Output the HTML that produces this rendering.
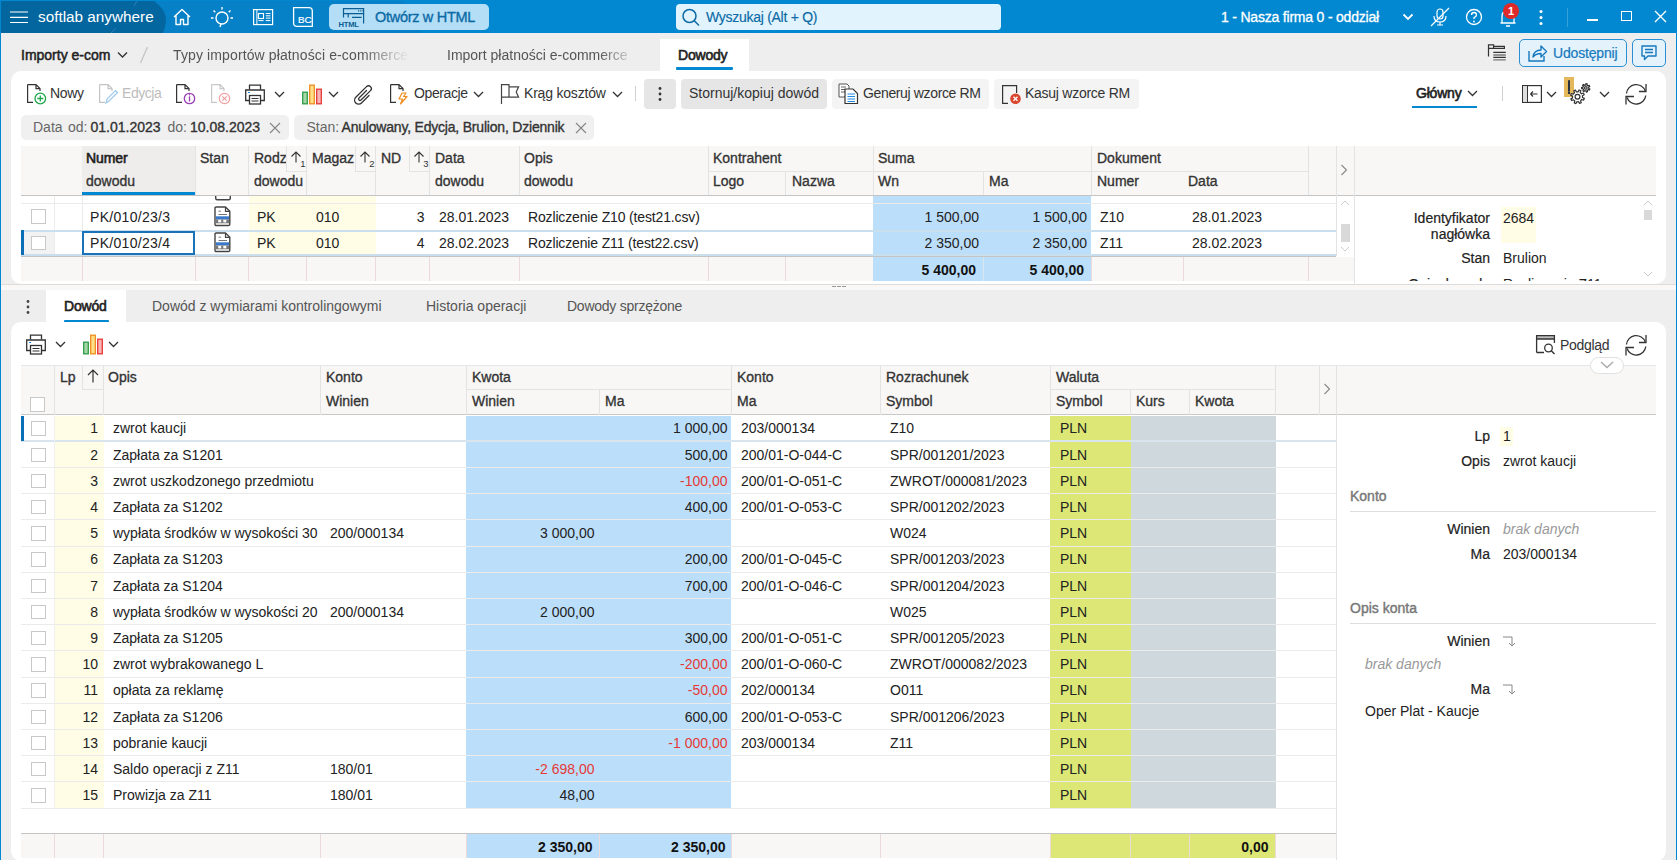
<!DOCTYPE html>
<html><head><meta charset="utf-8"><style>
html,body{margin:0;padding:0}
body{width:1677px;height:860px;position:relative;overflow:hidden;background:#eeeeee;font-family:"Liberation Sans",sans-serif;font-size:14px;color:#222}
.t{position:absolute;white-space:nowrap;font-size:14px}
svg{overflow:visible}
</style></head><body>
<div style="position:absolute;left:0px;top:0px;width:1677px;height:33px;background:#0288d1"></div>
<svg style="position:absolute;left:150px;top:0px;" width="280" height="33" viewBox="0 0 280 33"><path d="M0 1 H254 L271 33 H0 Z" fill="#0680c6"/></svg>
<svg style="position:absolute;left:0px;top:0px;" width="170" height="33" viewBox="0 0 170 33"><path d="M1 1 H154 C163 8 166 14 166 19 C166 25 164 30 163 33 H1 Z" fill="#04669f"/><path d="M137 1 L134 6 M116 28 L111 33" stroke="#2b7fb2" stroke-width="1"/></svg>
<svg style="position:absolute;left:9px;top:10px;" width="20" height="14" viewBox="0 0 20 14"><path d="M1 2 H19 M1 7.3 H19 M1 12.5 H19" stroke="#fff" stroke-width="1.2"/></svg>
<div class="t" style="left:38px;top:7.0px;line-height:20px;color:#fff;font-size:15.3px;">softlab anywhere</div>
<svg style="position:absolute;left:172px;top:8px;" width="20" height="18" viewBox="0 0 20 18"><path d="M2 9 L10 1.5 L18 9 M4 7.5 V16.5 H8.5 V11.5 H11.5 V16.5 H16 V7.5" fill="none" stroke="#fff" stroke-width="1.4" stroke-linejoin="round"/></svg>
<svg style="position:absolute;left:210px;top:6px;" width="24" height="22" viewBox="0 0 24 22"><circle cx="12" cy="12" r="6" fill="none" stroke="#fff" stroke-width="1.4"/><path d="M12 1 V3.5 M3.5 4.5 L5.3 6.3 M20.5 4.5 L18.7 6.3 M1 12 H3.5 M20.5 12 H23 M11 18 L10 21" stroke="#fff" stroke-width="1.4"/></svg>
<svg style="position:absolute;left:252px;top:8px;" width="22" height="18" viewBox="0 0 22 18"><rect x="1.6" y="1.6" width="19" height="15" fill="none" stroke="#fff" stroke-width="1.2"/><path d="M4.9 2 V16.5" stroke="#fff" stroke-width="1"/><rect x="6.5" y="5.5" width="5" height="5" fill="none" stroke="#fff" stroke-width="1.1"/><path d="M13.8 5.5 H18.5 M13.8 7.8 H18.5 M13.8 10.1 H18.5 M6.5 12.6 H11.5 M13.8 12.6 H18.5" stroke="#fff" stroke-width="1"/></svg>
<svg style="position:absolute;left:292px;top:6px;" width="22" height="22" viewBox="0 0 22 22"><path d="M1.6 1.6 H17 Q20.3 1.6 20.3 5 V20.3 H5 Q1.6 20.3 1.6 17 Z" fill="none" stroke="#fff" stroke-width="1.3"/><text x="6" y="17.4" font-family="Liberation Sans" font-size="9.8" fill="#fff" stroke="#fff" stroke-width="0.2">BC</text></svg>
<div style="position:absolute;left:329px;top:4px;width:160px;height:26px;background:#b3def5;border-radius:5px"></div>
<svg style="position:absolute;left:337px;top:6px;" width="28" height="22" viewBox="0 0 28 22"><path d="M6.5 11.5 V2.6 H26.6 V17.5 M6.5 7.6 H26.6 M11.2 7.6 V11.5 M15 11.3 H24.6" fill="none" stroke="#0b5d93" stroke-width="1.2"/><path d="M21 4.9 H22 M22.8 4.9 H23.8 M24.6 4.9 H25.6" stroke="#0b5d93" stroke-width="1.2"/><text x="1.5" y="20.6" font-family="Liberation Sans" font-size="7.6" font-weight="bold" fill="#0b5d93" letter-spacing="-0.2">HTML</text></svg>
<div class="t" style="left:375px;top:7.0px;line-height:20px;color:#0b6aa6;font-size:14.5px;letter-spacing:-0.3px;-webkit-text-stroke-width:0.35px">Otwórz w HTML</div>
<div style="position:absolute;left:676px;top:4px;width:325px;height:26px;background:#e1f3fc;border-radius:4px"></div>
<svg style="position:absolute;left:680px;top:7px;" width="22" height="20" viewBox="0 0 22 20"><circle cx="9.5" cy="9" r="6.5" fill="none" stroke="#0b6aa6" stroke-width="1.5"/><path d="M14.3 13.8 L19 18.5" stroke="#0b6aa6" stroke-width="1.5"/></svg>
<div class="t" style="left:706px;top:7.0px;line-height:20px;color:#0b6aa6;font-size:14px;letter-spacing:-0.28px;-webkit-text-stroke-width:0.15px">Wyszukaj (Alt + Q)</div>
<div class="t" style="left:1221px;top:7.0px;line-height:20px;color:#fff;font-size:14px;letter-spacing:-0.2px;-webkit-text-stroke-width:0.3px">1 - Nasza firma 0 - oddział</div>
<svg style="position:absolute;left:1402px;top:13px;" width="12" height="8" viewBox="0 0 12 8"><path d="M1.5 1.5 L6 6 L10.5 1.5" fill="none" stroke="#fff" stroke-width="1.8"/></svg>
<svg style="position:absolute;left:1429px;top:6px;" width="22" height="22" viewBox="0 0 22 22"><rect x="8" y="3" width="6" height="10" rx="3" fill="none" stroke="#fff" stroke-width="1.2"/><path d="M5 10 Q5 16 11 16 Q17 16 17 10 M11 16 V19 M8 19 H14 M2 20 L20 2" fill="none" stroke="#fff" stroke-width="1.2"/></svg>
<svg style="position:absolute;left:1465px;top:8px;" width="18" height="18" viewBox="0 0 18 18"><circle cx="9" cy="9" r="7.5" fill="none" stroke="#fff" stroke-width="1.3"/><path d="M6.5 7 Q6.5 4.5 9 4.5 Q11.5 4.5 11.5 7 Q11.5 8.5 9 9.7 V11" fill="none" stroke="#fff" stroke-width="1.3"/><circle cx="9" cy="13.5" r="0.9" fill="#fff"/></svg>
<svg style="position:absolute;left:1498px;top:6px;" width="20" height="22" viewBox="0 0 20 22"><path d="M4 17 V10 Q4 5 10 5 Q16 5 16 10 V17 H2.5 H17.5 M8 20 H12" fill="none" stroke="#fff" stroke-width="1.3"/></svg>
<div style="position:absolute;left:1503px;top:3px;width:16px;height:16px;background:#e02a2a;border-radius:50%"></div>
<div class="t" style="left:1503px;top:3.0px;line-height:16px;width:16px;text-align:center;color:#fff;font-size:11px;font-weight:bold">1</div>
<svg style="position:absolute;left:1538px;top:9px;" width="6" height="17" viewBox="0 0 6 17"><circle cx="3" cy="2.5" r="1.5" fill="#fff"/><circle cx="3" cy="8.5" r="1.5" fill="#fff"/><circle cx="3" cy="14.5" r="1.5" fill="#fff"/></svg>
<div style="position:absolute;left:1567px;top:8px;width:1px;height:19px;background:#3aa0dc"></div>
<div style="position:absolute;left:1587px;top:19px;width:11px;height:1.5px;background:#fff"></div>
<div style="position:absolute;left:1621px;top:11px;width:11px;height:10px;border:1.4px solid #fff;box-sizing:border-box"></div>
<svg style="position:absolute;left:1654px;top:10px;" width="13" height="13" viewBox="0 0 13 13"><path d="M1 1 L12 12 M12 1 L1 12" stroke="#fff" stroke-width="1.4"/></svg>
<div style="position:absolute;left:0px;top:33px;width:1677px;height:827px;background:#eeeeee"></div>
<div style="position:absolute;left:0px;top:0px;width:1px;height:860px;background:#0288d1"></div>
<div style="position:absolute;left:1676px;top:0px;width:1px;height:860px;background:#0288d1"></div>
<div class="t" style="left:21px;top:45.0px;line-height:20px;font-size:14px;color:#222;-webkit-text-stroke-width:0.5px">Importy e-com</div>
<svg style="position:absolute;left:117px;top:51px;" width="11" height="8" viewBox="0 0 11 8"><path d="M1 1.5 L5.5 6 L10 1.5" fill="none" stroke="#333" stroke-width="1.3"/></svg>
<svg style="position:absolute;left:139px;top:46px;" width="10" height="18" viewBox="0 0 10 18"><path d="M8.5 1 L1.5 17" stroke="#c4c4c4" stroke-width="1.2"/></svg>
<div class="t" style="left:173px;top:45px;line-height:20px;color:#555;width:236px;letter-spacing:0.12px;overflow:hidden;white-space:nowrap;-webkit-mask-image:linear-gradient(90deg,#000 80%,transparent 100%)">Typy importów płatności e-commerce</div>
<div class="t" style="left:447px;top:45px;line-height:20px;color:#555;width:190px;overflow:hidden;white-space:nowrap;-webkit-mask-image:linear-gradient(90deg,#000 80%,transparent 100%)">Import płatności e-commerce</div>
<div style="position:absolute;left:660px;top:39px;width:89px;height:33px;background:#fff"></div>
<div class="t" style="left:678px;top:45.0px;line-height:20px;color:#222;-webkit-text-stroke-width:0.6px;letter-spacing:-0.2px">Dowody</div>
<div style="position:absolute;left:676px;top:67px;width:57px;height:2.5px;background:#0288d1;border-radius:1px"></div>
<svg style="position:absolute;left:1486px;top:43px;" width="22" height="20" viewBox="0 0 22 20"><path d="M2.5 13.5 V1.8 H7.6 V5.4 H2.5 M7.6 3.4 H18.4 V5.4 H7.6" fill="none" stroke="#333" stroke-width="1.2"/><path d="M7.3 9.4 H19.8 M7.3 14.4 H19.8" stroke="#333" stroke-width="1.1"/><path d="M7.3 12 H19.8 M7.3 16.9 H19.8" stroke="#777" stroke-width="1.3"/></svg>
<div style="position:absolute;left:1519px;top:39px;width:108px;height:28px;background:#e3f2fb;border:1px solid #2a8fd3;border-radius:5px;box-sizing:border-box"></div>
<svg style="position:absolute;left:1526px;top:43px;" width="22" height="20" viewBox="0 0 22 20"><path d="M3 8 V18 H18 V13" fill="none" stroke="#1679be" stroke-width="1.4"/><path d="M7 14 Q8 7 15 7 V3 L20.5 8.5 L15 14 V10.5 Q10 10.5 7 14 Z" fill="none" stroke="#1679be" stroke-width="1.4" stroke-linejoin="round"/></svg>
<div class="t" style="left:1553px;top:43.0px;line-height:20px;color:#1679be;font-size:14px;letter-spacing:-0.18px;-webkit-text-stroke-width:0.2px">Udostępnij</div>
<div style="position:absolute;left:1632px;top:39px;width:34px;height:28px;background:#e3f2fb;border:1px solid #2a8fd3;border-radius:5px;box-sizing:border-box"></div>
<svg style="position:absolute;left:1640px;top:44px;" width="18" height="18" viewBox="0 0 18 18"><path d="M2 2 H16 V12 H8 L4.5 15.5 V12 H2 Z" fill="none" stroke="#1679be" stroke-width="1.4" stroke-linejoin="round"/><path d="M5 5.5 H13 M5 8.5 H13" stroke="#1679be" stroke-width="1.4"/></svg>
<div style="position:absolute;left:11px;top:71px;width:1655px;height:213px;background:#fff;border-radius:10px"></div>
<svg style="position:absolute;left:26px;top:84px;" width="22" height="21" viewBox="0 0 22 21"><path d="M1.6 0.6 H10 L14 4.6 V7 M10 0.6 V4.6 H14 M1.6 0.6 V18.4 H7" fill="none" stroke="#333" stroke-width="1.2"/><circle cx="14.3" cy="14.5" r="5.3" fill="#fff" stroke="#1fa64a" stroke-width="1.3"/><path d="M14.3 11.5 V17.5 M11.3 14.5 H17.3" stroke="#1fa64a" stroke-width="1.3"/></svg>
<div class="t" style="left:50px;top:83.0px;line-height:20px;color:#333;letter-spacing:-0.35px">Nowy</div>
<svg style="position:absolute;left:98px;top:84px;" width="22" height="21" viewBox="0 0 22 21"><path d="M1.6 0.6 H10 L14 4.6 V7 M10 0.6 V4.6 H14 M1.6 0.6 V18.4 H7" fill="none" stroke="#c4c4c4" stroke-width="1.2"/><path d="M8 19 L9 15 L17.5 6.5 L19.5 8.5 L11 17 Z" fill="#fff" stroke="#9cc8ec" stroke-width="1.2"/></svg>
<div class="t" style="left:122px;top:83.0px;line-height:20px;color:#bdbdbd;letter-spacing:-0.45px">Edycja</div>
<svg style="position:absolute;left:175px;top:84px;" width="22" height="21" viewBox="0 0 22 21"><path d="M1.6 0.6 H10 L14 4.6 V7 M10 0.6 V4.6 H14 M1.6 0.6 V18.4 H7" fill="none" stroke="#333" stroke-width="1.2"/><circle cx="14.5" cy="14.5" r="5.2" fill="#fff" stroke="#9b3fb5" stroke-width="1.3"/><path d="M14.5 12.3 V17.5" stroke="#9b3fb5" stroke-width="1.3"/><circle cx="14.5" cy="10.7" r="0.7" fill="#9b3fb5"/></svg>
<svg style="position:absolute;left:210px;top:84px;" width="22" height="21" viewBox="0 0 22 21"><path d="M1.6 0.6 H10 L14 4.6 V7 M10 0.6 V4.6 H14 M1.6 0.6 V18.4 H7" fill="none" stroke="#c8c8c8" stroke-width="1.2"/><circle cx="14.5" cy="14.5" r="5.2" fill="#fff" stroke="#f2a0a0" stroke-width="1.2"/><path d="M12.3 12.3 L16.7 16.7 M16.7 12.3 L12.3 16.7" stroke="#f2a0a0" stroke-width="1.2"/></svg>
<svg style="position:absolute;left:244px;top:84px;" width="22" height="21" viewBox="0 0 22 21"><path d="M5.5 5.5 V1.2 H16.5 V5.5" fill="none" stroke="#333" stroke-width="1.3"/><path d="M5 16.5 H1.7 V6.0 H20.3 V16.5 H17" fill="none" stroke="#333" stroke-width="1.3"/><rect x="5.5" y="11.5" width="11" height="8.5" fill="#fff" stroke="#333" stroke-width="1.3"/><path d="M7.5 14.5 H14.5 M7.5 17.0 H14.5" stroke="#333" stroke-width="1"/><path d="M4 8.5 H6" stroke="#1e88e5" stroke-width="1"/></svg>
<svg style="position:absolute;left:274px;top:91px;" width="11" height="7" viewBox="0 0 11 7"><path d="M1 1 L5.5 5.5 L10 1" fill="none" stroke="#333" stroke-width="1.3"/></svg>
<svg style="position:absolute;left:301px;top:83px;" width="22" height="22" viewBox="0 0 22 22"><rect x="1.7" y="9.2" width="4.6" height="11.6" fill="#a5d6a7" stroke="#2e9e47" stroke-width="1.3"/><rect x="8.7" y="2.2" width="4.6" height="18.6" fill="#ffe08a" stroke="#f08c1f" stroke-width="1.3"/><rect x="15.7" y="6.2" width="4.6" height="14.6" fill="#f7b5b5" stroke="#e53935" stroke-width="1.3"/></svg>
<svg style="position:absolute;left:328px;top:91px;" width="11" height="7" viewBox="0 0 11 7"><path d="M1 1 L5.5 5.5 L10 1" fill="none" stroke="#333" stroke-width="1.3"/></svg>
<svg style="position:absolute;left:352px;top:83px;" width="22" height="22" viewBox="0 0 22 22"><path d="M17 12.5 L9.5 20 A4 4 0 0 1 3.8 14.3 L14.5 3.6 A2.8 2.8 0 0 1 18.5 7.6 L9 17 A1.4 1.4 0 0 1 7 15 L14.5 7.5" fill="none" stroke="#333" stroke-width="1.3" stroke-linecap="round"/></svg>
<svg style="position:absolute;left:389px;top:84px;" width="22" height="21" viewBox="0 0 22 21"><path d="M1.6 0.6 H10 L14 4.6 V7 M10 0.6 V4.6 H14 M1.6 0.6 V18.4 H7" fill="none" stroke="#333" stroke-width="1.2"/><path d="M13 9 L10 15 H13.5 L11.5 20 L18 12.5 H14.5 L17 9 Z" fill="#fff" stroke="#f08c1f" stroke-width="1.2" stroke-linejoin="round"/></svg>
<div class="t" style="left:414px;top:83.0px;line-height:20px;color:#333;letter-spacing:-0.4px">Operacje</div>
<svg style="position:absolute;left:473px;top:91px;" width="11" height="7" viewBox="0 0 11 7"><path d="M1 1 L5.5 5.5 L10 1" fill="none" stroke="#333" stroke-width="1.3"/></svg>
<svg style="position:absolute;left:499px;top:84px;" width="22" height="21" viewBox="0 0 22 21"><path d="M2.5 20 V0.6 H10 V13.2 H2.5 M10 2.8 H19.6 L17.2 8 L19.6 13.2 H10" fill="none" stroke="#444" stroke-width="1.2" stroke-linejoin="miter"/></svg>
<div class="t" style="left:524px;top:83.0px;line-height:20px;color:#333;letter-spacing:-0.2px">Krąg kosztów</div>
<svg style="position:absolute;left:612px;top:91px;" width="11" height="7" viewBox="0 0 11 7"><path d="M1 1 L5.5 5.5 L10 1" fill="none" stroke="#333" stroke-width="1.3"/></svg>
<div style="position:absolute;left:635px;top:86px;width:1px;height:15px;background:#d0d0d0"></div>
<div style="position:absolute;left:644px;top:79px;width:32px;height:30px;background:#e6e6e6;border-radius:4px"></div>
<svg style="position:absolute;left:657px;top:86px;" width="6" height="16" viewBox="0 0 6 16"><circle cx="3" cy="2.5" r="1.4" fill="#333"/><circle cx="3" cy="8" r="1.4" fill="#333"/><circle cx="3" cy="13.5" r="1.4" fill="#333"/></svg>
<div style="position:absolute;left:681px;top:79px;width:146px;height:30px;background:#e6e6e6;border-radius:4px"></div>
<div class="t" style="left:689px;top:83.0px;line-height:20px;color:#333">Stornuj/kopiuj dowód</div>
<div style="position:absolute;left:832px;top:79px;width:157px;height:30px;background:#f4f4f4;border-radius:4px"></div>
<svg style="position:absolute;left:838px;top:83px;" width="22" height="22" viewBox="0 0 22 22"><path d="M1 1 H9 L11 3 V14 H1 Z" fill="#fff" stroke="#555" stroke-width="1"/><path d="M3 4 H8 M3 6.5 H8 M3 9 H8" stroke="#555" stroke-width="0.9"/><path d="M7 6 H15 L19.5 10.5 V20.5 H7 Z" fill="#fff" stroke="#333" stroke-width="1.2"/><path d="M9.5 11 H17 M9.5 13.5 H17 M9.5 16 H17 M9.5 18.5 H17" stroke="#1e88e5" stroke-width="1"/></svg>
<div class="t" style="left:863px;top:83.0px;line-height:20px;color:#333;letter-spacing:-0.36px">Generuj wzorce RM</div>
<div style="position:absolute;left:994px;top:79px;width:145px;height:30px;background:#f4f4f4;border-radius:4px"></div>
<svg style="position:absolute;left:1001px;top:84px;" width="22" height="21" viewBox="0 0 22 21"><path d="M7 19.4 H1.6 V1.6 H15.6 V9" fill="none" stroke="#333" stroke-width="1.2"/><circle cx="14.5" cy="14.8" r="5.3" fill="#d9472f"/><path d="M12.5 12.8 L16.5 16.8 M16.5 12.8 L12.5 16.8" stroke="#fff" stroke-width="1.3"/></svg>
<div class="t" style="left:1025px;top:83.0px;line-height:20px;color:#333;letter-spacing:-0.26px">Kasuj wzorce RM</div>
<div class="t" style="left:1416px;top:83.0px;line-height:20px;color:#222;-webkit-text-stroke-width:0.6px;letter-spacing:-0.2px">Główny</div>
<svg style="position:absolute;left:1467px;top:90px;" width="11" height="7" viewBox="0 0 11 7"><path d="M1 1 L5.5 5.5 L10 1" fill="none" stroke="#333" stroke-width="1.3"/></svg>
<div style="position:absolute;left:1412px;top:105.5px;width:65px;height:2px;background:#0288d1"></div>
<div style="position:absolute;left:1502px;top:86px;width:1px;height:15px;background:#d0d0d0"></div>
<svg style="position:absolute;left:1521px;top:84px;" width="22" height="20" viewBox="0 0 22 20"><rect x="1.6" y="1.6" width="18.8" height="16.8" fill="none" stroke="#333" stroke-width="1.2"/><rect x="2" y="2" width="4.5" height="16" fill="#ddd"/><path d="M6.5 2 V18" stroke="#333" stroke-width="1"/><path d="M9.5 10 H16.5 M9.5 10 L12 7.5 M9.5 10 L12 12.5" stroke="#333" stroke-width="1.2" fill="none"/></svg>
<svg style="position:absolute;left:1546px;top:91px;" width="11" height="7" viewBox="0 0 11 7"><path d="M1 1 L5.5 5.5 L10 1" fill="none" stroke="#333" stroke-width="1.3"/></svg>
<div style="position:absolute;left:1564px;top:77px;width:10px;height:20px;background:#e6b85c"></div>
<div style="position:absolute;left:1568px;top:80px;width:2px;height:11.5px;background:#2a3440;border-radius:1px"></div>
<div style="position:absolute;left:1568px;top:92.3px;width:2px;height:2px;background:#2a3440"></div>
<svg style="position:absolute;left:1568px;top:80px;" width="30" height="26" viewBox="0 0 30 26"><path d="M14.50 16.80 L14.45 17.50 L16.33 18.33 L15.69 20.08 L13.72 19.48 L13.04 20.34 L13.04 20.34 L12.50 20.80 L13.25 22.71 L11.56 23.49 L10.59 21.68 L9.50 21.80 L9.50 21.80 L8.80 21.75 L7.97 23.63 L6.22 22.99 L6.82 21.02 L5.96 20.34 L5.96 20.34 L5.50 19.80 L3.59 20.55 L2.81 18.86 L4.62 17.89 L4.50 16.80 L4.50 16.80 L4.55 16.10 L2.67 15.27 L3.31 13.52 L5.28 14.12 L5.96 13.26 L5.96 13.26 L6.50 12.80 L5.75 10.89 L7.44 10.11 L8.41 11.92 L9.50 11.80 L9.50 11.80 L10.20 11.85 L11.03 9.97 L12.78 10.61 L12.18 12.58 L13.04 13.26 L13.04 13.26 L13.50 13.80 L15.41 13.05 L16.19 14.74 L14.38 15.71 L14.50 16.80 Z" fill="#fff" stroke="#333" stroke-width="1.2" stroke-linejoin="round"/><circle cx="9.5" cy="16.8" r="2.4" fill="none" stroke="#333" stroke-width="1.2"/><path d="M20.70 7.90 L20.66 8.37 L21.87 8.94 L21.37 10.12 L20.12 9.65 L19.61 10.17 L19.61 10.17 L19.22 10.43 L19.52 11.73 L18.29 12.07 L17.88 10.80 L17.15 10.73 L17.15 10.73 L16.71 10.59 L15.88 11.63 L14.84 10.88 L15.58 9.77 L15.19 9.16 L15.19 9.16 L15.02 8.72 L13.68 8.72 L13.62 7.45 L14.96 7.33 L15.19 6.64 L15.19 6.64 L15.42 6.24 L14.59 5.19 L15.55 4.35 L16.47 5.32 L17.15 5.07 L17.15 5.07 L17.62 5.01 L17.91 3.70 L19.17 3.93 L18.99 5.25 L19.61 5.63 L19.61 5.63 L19.95 5.95 L21.15 5.37 L21.76 6.50 L20.61 7.18 L20.70 7.90 Z" fill="#fff" stroke="#333" stroke-width="1.2" stroke-linejoin="round"/><circle cx="17.8" cy="7.9" r="1.3" fill="none" stroke="#333" stroke-width="1.2"/></svg>
<svg style="position:absolute;left:1599px;top:91px;" width="11" height="7" viewBox="0 0 11 7"><path d="M1 1 L5.5 5.5 L10 1" fill="none" stroke="#333" stroke-width="1.3"/></svg>
<svg style="position:absolute;left:1625px;top:83px;" width="22" height="22" viewBox="0 0 22 22"><path d="M1.5 10.5 A9.7 9.7 0 0 1 20.3 8 M20.8 12.5 A9.7 9.7 0 0 1 2 14.5" fill="none" stroke="#333" stroke-width="1.3"/><path d="M21 1 V8.5 H14 M1 21.5 V13.5 H9" fill="none" stroke="#333" stroke-width="1.3"/></svg>
<div style="position:absolute;left:21px;top:115px;width:268px;height:25px;background:#f0f0f0;border-radius:5px"></div>
<div class="t" style="left:33px;top:117.0px;line-height:20px;color:#666">Data</div>
<div class="t" style="left:68px;top:117.0px;line-height:20px;color:#666">od:</div>
<div class="t" style="left:90.5px;top:117.0px;line-height:20px;color:#333;-webkit-text-stroke:0.35px #333">01.01.2023</div>
<div class="t" style="left:167.5px;top:117.0px;line-height:20px;color:#666">do:</div>
<div class="t" style="left:190px;top:117.0px;line-height:20px;color:#333;-webkit-text-stroke:0.35px #333">10.08.2023</div>
<svg style="position:absolute;left:269px;top:122px;" width="12" height="12" viewBox="0 0 12 12"><path d="M1 1 L11 11 M11 1 L1 11" stroke="#888" stroke-width="1.2"/></svg>
<div style="position:absolute;left:294px;top:115px;width:300px;height:25px;background:#f0f0f0;border-radius:5px"></div>
<div class="t" style="left:306.5px;top:117.0px;line-height:20px;color:#666">Stan:</div>
<div class="t" style="left:341.5px;top:117.0px;line-height:20px;color:#333;-webkit-text-stroke:0.35px #333;letter-spacing:-0.2px">Anulowany, Edycja, Brulion, Dziennik</div>
<svg style="position:absolute;left:575px;top:122px;" width="12" height="12" viewBox="0 0 12 12"><path d="M1 1 L11 11 M11 1 L1 11" stroke="#888" stroke-width="1.2"/></svg>
<div style="position:absolute;left:21px;top:146px;width:1315px;height:49px;background:#f8f7f6"></div>
<div style="position:absolute;left:82px;top:146px;width:113px;height:49px;background:#eeedeb"></div>
<div style="position:absolute;left:82px;top:192px;width:113px;height:3px;background:#0288d1"></div>
<div style="position:absolute;left:21px;top:195px;width:1315px;height:1px;background:#c4c4c4"></div>
<div style="position:absolute;left:195px;top:146px;width:1px;height:49px;background:#e3e3e3"></div>
<div style="position:absolute;left:248px;top:146px;width:1px;height:49px;background:#e3e3e3"></div>
<div style="position:absolute;left:306px;top:146px;width:1px;height:49px;background:#e3e3e3"></div>
<div style="position:absolute;left:375px;top:146px;width:1px;height:49px;background:#e3e3e3"></div>
<div style="position:absolute;left:429px;top:146px;width:1px;height:49px;background:#e3e3e3"></div>
<div style="position:absolute;left:519px;top:146px;width:1px;height:49px;background:#e3e3e3"></div>
<div style="position:absolute;left:708px;top:146px;width:1px;height:49px;background:#e3e3e3"></div>
<div style="position:absolute;left:1091px;top:146px;width:1px;height:49px;background:#e3e3e3"></div>
<div style="position:absolute;left:1308px;top:146px;width:1px;height:49px;background:#e3e3e3"></div>
<div style="position:absolute;left:785px;top:171px;width:1px;height:24px;background:#e3e3e3"></div>
<div style="position:absolute;left:983px;top:171px;width:1px;height:24px;background:#e3e3e3"></div>
<div style="position:absolute;left:873px;top:146px;width:1px;height:49px;background:#e3e3e3"></div>
<div style="position:absolute;left:708px;top:170.5px;width:383px;height:1px;background:#e3e3e3"></div>
<div style="position:absolute;left:1091px;top:170.5px;width:217px;height:1px;background:#e3e3e3"></div>
<div style="position:absolute;left:286px;top:146px;width:1px;height:25px;background:#e3e3e3"></div>
<div style="position:absolute;left:286px;top:170.5px;width:20px;height:1px;background:#e3e3e3"></div>
<svg style="position:absolute;left:288px;top:149px;" width="18" height="20" viewBox="0 0 18 20"><path d="M8 13.5 V3 M3.5 7.5 L8 3 L12.5 7.5" fill="none" stroke="#333" stroke-width="1.1"/><text x="12.3" y="18" font-family="Liberation Sans" font-size="9.5" fill="#333">1</text></svg>
<div style="position:absolute;left:355px;top:146px;width:1px;height:25px;background:#e3e3e3"></div>
<div style="position:absolute;left:355px;top:170.5px;width:20px;height:1px;background:#e3e3e3"></div>
<svg style="position:absolute;left:357px;top:149px;" width="18" height="20" viewBox="0 0 18 20"><path d="M8 13.5 V3 M3.5 7.5 L8 3 L12.5 7.5" fill="none" stroke="#333" stroke-width="1.1"/><text x="12.3" y="18" font-family="Liberation Sans" font-size="9.5" fill="#333">2</text></svg>
<div style="position:absolute;left:409px;top:146px;width:1px;height:25px;background:#e3e3e3"></div>
<div style="position:absolute;left:409px;top:170.5px;width:20px;height:1px;background:#e3e3e3"></div>
<svg style="position:absolute;left:411px;top:149px;" width="18" height="20" viewBox="0 0 18 20"><path d="M8 13.5 V3 M3.5 7.5 L8 3 L12.5 7.5" fill="none" stroke="#333" stroke-width="1.1"/><text x="12.3" y="18" font-family="Liberation Sans" font-size="9.5" fill="#333">3</text></svg>
<div class="t" style="left:86px;top:148.0px;line-height:20px;color:#222;-webkit-text-stroke-width:0.6px;letter-spacing:-0.1px">Numer</div>
<div class="t" style="left:86px;top:171.0px;line-height:20px;color:#333;-webkit-text-stroke:0.33px #333">dowodu</div>
<div class="t" style="left:200px;top:148.0px;line-height:20px;color:#333;-webkit-text-stroke:0.33px #333">Stan</div>
<div class="t" style="left:254px;top:148px;line-height:20px;width:32px;overflow:hidden;color:#333;-webkit-text-stroke:0.33px #333">Rodzaj</div>
<div class="t" style="left:254px;top:171.0px;line-height:20px;color:#333;-webkit-text-stroke:0.33px #333">dowodu</div>
<div class="t" style="left:312px;top:148px;line-height:20px;width:42px;overflow:hidden;color:#333;-webkit-text-stroke:0.33px #333">Magazyn</div>
<div class="t" style="left:381px;top:148.0px;line-height:20px;color:#333;-webkit-text-stroke:0.33px #333">ND</div>
<div class="t" style="left:435px;top:148.0px;line-height:20px;color:#333;-webkit-text-stroke:0.33px #333">Data</div>
<div class="t" style="left:435px;top:171.0px;line-height:20px;color:#333;-webkit-text-stroke:0.33px #333">dowodu</div>
<div class="t" style="left:524px;top:148.0px;line-height:20px;color:#333;-webkit-text-stroke:0.33px #333">Opis</div>
<div class="t" style="left:524px;top:171.0px;line-height:20px;color:#333;-webkit-text-stroke:0.33px #333">dowodu</div>
<div class="t" style="left:713px;top:148.0px;line-height:20px;color:#333;-webkit-text-stroke:0.33px #333">Kontrahent</div>
<div class="t" style="left:713px;top:171.0px;line-height:20px;color:#333;-webkit-text-stroke:0.33px #333">Logo</div>
<div class="t" style="left:792px;top:171.0px;line-height:20px;color:#333;-webkit-text-stroke:0.33px #333">Nazwa</div>
<div class="t" style="left:878px;top:148.0px;line-height:20px;color:#333;-webkit-text-stroke:0.33px #333">Suma</div>
<div class="t" style="left:878px;top:171.0px;line-height:20px;color:#333;-webkit-text-stroke:0.33px #333">Wn</div>
<div class="t" style="left:989px;top:171.0px;line-height:20px;color:#333;-webkit-text-stroke:0.33px #333">Ma</div>
<div class="t" style="left:1097px;top:148.0px;line-height:20px;color:#333;-webkit-text-stroke:0.33px #333">Dokument</div>
<div class="t" style="left:1097px;top:171.0px;line-height:20px;color:#333;-webkit-text-stroke:0.33px #333">Numer</div>
<div class="t" style="left:1188px;top:171.0px;line-height:20px;color:#333;-webkit-text-stroke:0.33px #333">Data</div>
<div style="position:absolute;left:1336px;top:146px;width:320px;height:49px;background:#f8f7f6"></div>
<div style="position:absolute;left:1336px;top:195px;width:320px;height:1px;background:#c4c4c4"></div>
<div style="position:absolute;left:1336px;top:146px;width:1px;height:110px;background:#e3e3e3"></div>
<svg style="position:absolute;left:1340px;top:164px;" width="8" height="12" viewBox="0 0 8 12"><path d="M1.5 1 L6.5 6 L1.5 11" fill="none" stroke="#888" stroke-width="1.1"/></svg>
<div style="position:absolute;left:1354px;top:146px;width:1px;height:138px;background:#e3e3e3"></div>
<div style="position:absolute;left:249px;top:196px;width:126.5px;height:7px;background:#fffde6"></div>
<div style="position:absolute;left:873px;top:196px;width:218px;height:7px;background:#bbdefb"></div>
<div style="position:absolute;left:21px;top:203px;width:1315px;height:1px;background:#ebebeb"></div>
<svg style="position:absolute;left:214px;top:196px;overflow:hidden" width="18" height="5" viewBox="0 0 18 5"><path d="M1.7 -6 V2.2 Q1.7 3.7 3.2 3.7 H14.8 Q16.3 3.7 16.3 2.2 V-6" fill="none" stroke="#444" stroke-width="1.4"/><path d="M4 -0.5 H14" stroke="#666" stroke-width="1"/></svg>
<div style="position:absolute;left:54px;top:196px;width:1px;height:59px;background:#efeaea"></div>
<div style="position:absolute;left:82px;top:196px;width:1px;height:35px;background:#efeaea"></div>
<div style="position:absolute;left:249px;top:204px;width:126.5px;height:26px;background:#fffde6"></div>
<div style="position:absolute;left:873px;top:204px;width:218px;height:26px;background:#bbdefb"></div>
<div style="position:absolute;left:31px;top:209.2px;width:15px;height:14.5px;border:1.2px solid #c8c8c8;box-sizing:border-box;background:#fff"></div>
<svg style="position:absolute;left:214px;top:206px;" width="18" height="21" viewBox="0 0 18 21"><path d="M2.2 1 H11.5 L15.8 5.3 V18.2 Q15.8 19.5 14.5 19.5 H2.2 Q1 19.5 1 18.2 V2.2 Q1 1 2.2 1 Z" fill="#fff" stroke="#444" stroke-width="1.4" stroke-linejoin="round"/><path d="M11.5 1 V5.3 H15.8" fill="none" stroke="#444" stroke-width="1.2"/><path d="M4.5 5.2 H7 M4.5 8.5 H13" stroke="#777" stroke-width="1"/><rect x="2" y="10.3" width="13" height="3.2" fill="#3a78c9"/><rect x="2" y="13.5" width="13" height="3.8" fill="#777"/><rect x="4.2" y="13.8" width="3" height="2.6" fill="#fff"/><rect x="9.3" y="13.8" width="3" height="2.6" fill="#fff"/></svg>
<div class="t" style="left:90px;top:207.0px;line-height:20px;color:#222;letter-spacing:0.3px">PK/010/23/3</div>
<div class="t" style="left:257px;top:207.0px;line-height:20px;color:#222">PK</div>
<div class="t" style="left:316px;top:207.0px;line-height:20px;color:#222">010</div>
<div class="t" style="left:124.5px;width:300px;text-align:right;top:207.0px;line-height:20px;color:#222">3</div>
<div class="t" style="left:439px;top:207.0px;line-height:20px;color:#222">28.01.2023</div>
<div class="t" style="left:528px;top:207.0px;line-height:20px;color:#222;letter-spacing:-0.15px">Rozliczenie Z10 (test21.csv)</div>
<div class="t" style="left:679px;width:300px;text-align:right;top:207.0px;line-height:20px;color:#222">1 500,00</div>
<div class="t" style="left:787px;width:300px;text-align:right;top:207.0px;line-height:20px;color:#222">1 500,00</div>
<div class="t" style="left:1100px;top:207.0px;line-height:20px;color:#222">Z10</div>
<div class="t" style="left:1192px;top:207.0px;line-height:20px;color:#222">28.01.2023</div>
<div style="position:absolute;left:21px;top:230px;width:1315px;height:2px;background:#c9dfee"></div>
<div style="position:absolute;left:249px;top:232px;width:126.5px;height:22px;background:#fffde6"></div>
<div style="position:absolute;left:873px;top:232px;width:218px;height:22px;background:#bbdefb"></div>
<div style="position:absolute;left:21px;top:254px;width:1315px;height:1.5px;background:#c9dfee"></div>
<div style="position:absolute;left:21px;top:230px;width:3px;height:25px;background:#0b6fb8"></div>
<div style="position:absolute;left:24px;top:232px;width:30px;height:22px;background:#f2f2f2"></div>
<div style="position:absolute;left:31px;top:235.8px;width:15px;height:14.5px;border:1.2px solid #c8c8c8;box-sizing:border-box;background:#fff"></div>
<svg style="position:absolute;left:214px;top:232px;" width="18" height="21" viewBox="0 0 18 21"><path d="M2.2 1 H11.5 L15.8 5.3 V18.2 Q15.8 19.5 14.5 19.5 H2.2 Q1 19.5 1 18.2 V2.2 Q1 1 2.2 1 Z" fill="#fff" stroke="#444" stroke-width="1.4" stroke-linejoin="round"/><path d="M11.5 1 V5.3 H15.8" fill="none" stroke="#444" stroke-width="1.2"/><path d="M4.5 5.2 H7 M4.5 8.5 H13" stroke="#777" stroke-width="1"/><rect x="2" y="10.3" width="13" height="3.2" fill="#3a78c9"/><rect x="2" y="13.5" width="13" height="3.8" fill="#777"/><rect x="4.2" y="13.8" width="3" height="2.6" fill="#fff"/><rect x="9.3" y="13.8" width="3" height="2.6" fill="#fff"/></svg>
<div style="position:absolute;left:82px;top:231px;width:113px;height:24px;border:2px solid #1a72b8;box-sizing:border-box"></div>
<div class="t" style="left:90px;top:233.0px;line-height:20px;color:#222;letter-spacing:0.3px">PK/010/23/4</div>
<div class="t" style="left:257px;top:233.0px;line-height:20px;color:#222">PK</div>
<div class="t" style="left:316px;top:233.0px;line-height:20px;color:#222">010</div>
<div class="t" style="left:124.5px;width:300px;text-align:right;top:233.0px;line-height:20px;color:#222">4</div>
<div class="t" style="left:439px;top:233.0px;line-height:20px;color:#222">28.02.2023</div>
<div class="t" style="left:528px;top:233.0px;line-height:20px;color:#222;letter-spacing:-0.15px">Rozliczenie Z11 (test22.csv)</div>
<div class="t" style="left:679px;width:300px;text-align:right;top:233.0px;line-height:20px;color:#222">2 350,00</div>
<div class="t" style="left:787px;width:300px;text-align:right;top:233.0px;line-height:20px;color:#222">2 350,00</div>
<div class="t" style="left:1100px;top:233.0px;line-height:20px;color:#222">Z11</div>
<div class="t" style="left:1192px;top:233.0px;line-height:20px;color:#222">28.02.2023</div>
<div style="position:absolute;left:21px;top:255.5px;width:1315px;height:1.5px;background:#c4c4c4"></div>
<div style="position:absolute;left:21px;top:257px;width:1333px;height:24px;background:#f8f7f6"></div>
<div style="position:absolute;left:873px;top:257px;width:218px;height:24px;background:#bbdefb"></div>
<div style="position:absolute;left:82px;top:257px;width:1px;height:24px;background:#ecd9d9"></div>
<div style="position:absolute;left:195px;top:257px;width:1px;height:24px;background:#ecd9d9"></div>
<div style="position:absolute;left:248px;top:257px;width:1px;height:24px;background:#ecd9d9"></div>
<div style="position:absolute;left:306px;top:257px;width:1px;height:24px;background:#ecd9d9"></div>
<div style="position:absolute;left:375px;top:257px;width:1px;height:24px;background:#ecd9d9"></div>
<div style="position:absolute;left:429px;top:257px;width:1px;height:24px;background:#ecd9d9"></div>
<div style="position:absolute;left:519px;top:257px;width:1px;height:24px;background:#ecd9d9"></div>
<div style="position:absolute;left:708px;top:257px;width:1px;height:24px;background:#ecd9d9"></div>
<div style="position:absolute;left:785px;top:257px;width:1px;height:24px;background:#ecd9d9"></div>
<div style="position:absolute;left:1091px;top:257px;width:1px;height:24px;background:#ecd9d9"></div>
<div style="position:absolute;left:1183px;top:257px;width:1px;height:24px;background:#ecd9d9"></div>
<div style="position:absolute;left:1308px;top:257px;width:1px;height:24px;background:#ecd9d9"></div>
<div style="position:absolute;left:983px;top:257px;width:1px;height:24px;background:#d8e6f0"></div>
<div class="t" style="left:676px;width:300px;text-align:right;top:259.5px;line-height:20px;font-weight:bold;color:#111">5 400,00</div>
<div class="t" style="left:784px;width:300px;text-align:right;top:259.5px;line-height:20px;font-weight:bold;color:#111">5 400,00</div>
<svg style="position:absolute;left:1340px;top:199px;" width="10" height="8" viewBox="0 0 10 8"><path d="M1 6 L5 2 L9 6" fill="none" stroke="#ccc" stroke-width="1"/></svg>
<div style="position:absolute;left:1341px;top:224px;width:9px;height:18px;background:#d9d9d9"></div>
<svg style="position:absolute;left:1340px;top:245px;" width="10" height="8" viewBox="0 0 10 8"><path d="M1 2 L5 6 L9 2" fill="none" stroke="#ccc" stroke-width="1"/></svg>
<div style="position:absolute;left:1355px;top:196px;width:285px;height:85px;overflow:hidden">
<div class="t" style="left:-165px;width:300px;text-align:right;top:11.5px;line-height:20px;color:#222;-webkit-text-stroke:0.2px #222">Identyfikator</div>
<div class="t" style="left:-165px;width:300px;text-align:right;top:27.5px;line-height:20px;color:#222;-webkit-text-stroke:0.2px #222">nagłówka</div>
<div style="position:absolute;left:146px;top:11px;width:35px;height:36px;background:#fffde6"></div>
<div class="t" style="left:148px;top:11.5px;line-height:20px;color:#222">2684</div>
<div class="t" style="left:-165px;width:300px;text-align:right;top:52.0px;line-height:20px;color:#222;-webkit-text-stroke:0.2px #222">Stan</div>
<div class="t" style="left:148px;top:52.0px;line-height:20px;color:#222">Brulion</div>
<div class="t" style="left:-165px;width:300px;text-align:right;top:78.0px;line-height:20px;color:#222;-webkit-text-stroke:0.2px #222">Opis dowodu</div>
<div class="t" style="left:148px;top:78.0px;line-height:20px;color:#222">Rozliczenie Z11</div>
</div>
<svg style="position:absolute;left:1643px;top:199px;" width="10" height="8" viewBox="0 0 10 8"><path d="M1 6 L5 2 L9 6" fill="none" stroke="#ccc" stroke-width="1"/></svg>
<div style="position:absolute;left:1644px;top:210px;width:8px;height:10px;background:#d9d9d9"></div>
<svg style="position:absolute;left:1643px;top:270px;" width="10" height="8" viewBox="0 0 10 8"><path d="M1 2 L5 6 L9 2" fill="none" stroke="#ccc" stroke-width="1"/></svg>
<div style="position:absolute;left:1px;top:284px;width:1675px;height:1.2px;background:#dcdcdc"></div>
<div style="position:absolute;left:1px;top:285.2px;width:1675px;height:4.8px;background:#f9f8f7"></div>
<svg style="position:absolute;left:831px;top:285px;" width="16" height="3" viewBox="0 0 16 3"><path d="M1 1.5 H5 M6 1.5 H10 M11 1.5 H15" stroke="#9a9a9a" stroke-width="1.1"/></svg>
<svg style="position:absolute;left:25px;top:299px;" width="6" height="16" viewBox="0 0 6 16"><circle cx="3" cy="2.5" r="1.4" fill="#444"/><circle cx="3" cy="8" r="1.4" fill="#444"/><circle cx="3" cy="13.5" r="1.4" fill="#444"/></svg>
<div style="position:absolute;left:46px;top:290px;width:80px;height:33px;background:#fff"></div>
<div class="t" style="left:64px;top:296.0px;line-height:20px;color:#222;-webkit-text-stroke-width:0.6px;letter-spacing:-0.2px">Dowód</div>
<div style="position:absolute;left:64px;top:320px;width:45px;height:2.5px;background:#0288d1;border-radius:1px"></div>
<div class="t" style="left:152px;top:296.0px;line-height:20px;color:#555">Dowód z wymiarami kontrolingowymi</div>
<div class="t" style="left:426px;top:296.0px;line-height:20px;color:#555">Historia operacji</div>
<div class="t" style="left:567px;top:296.0px;line-height:20px;color:#555;letter-spacing:-0.25px">Dowody sprzężone</div>
<div style="position:absolute;left:11px;top:322px;width:1655px;height:539px;background:#fff;border-radius:10px"></div>
<svg style="position:absolute;left:25px;top:334px;" width="22" height="22" viewBox="0 0 22 22"><path d="M5.5 5.5 V1.2 H16.5 V5.5" fill="none" stroke="#333" stroke-width="1.3"/><path d="M5 16.5 H1.7 V6.0 H20.3 V16.5 H17" fill="none" stroke="#333" stroke-width="1.3"/><rect x="5.5" y="11.5" width="11" height="8.5" fill="#fff" stroke="#333" stroke-width="1.3"/><path d="M7.5 14.5 H14.5 M7.5 17.0 H14.5" stroke="#333" stroke-width="1"/><path d="M4 8.5 H6" stroke="#1e88e5" stroke-width="1"/></svg>
<svg style="position:absolute;left:55px;top:341px;" width="11" height="7" viewBox="0 0 11 7"><path d="M1 1 L5.5 5.5 L10 1" fill="none" stroke="#333" stroke-width="1.3"/></svg>
<svg style="position:absolute;left:82px;top:333px;" width="22" height="23" viewBox="0 0 22 23"><rect x="1.7" y="9.2" width="4.6" height="11.6" fill="#a5d6a7" stroke="#2e9e47" stroke-width="1.3"/><rect x="8.7" y="2.2" width="4.6" height="18.6" fill="#ffe08a" stroke="#f08c1f" stroke-width="1.3"/><rect x="15.7" y="6.2" width="4.6" height="14.6" fill="#f7b5b5" stroke="#e53935" stroke-width="1.3"/></svg>
<svg style="position:absolute;left:108px;top:341px;" width="11" height="7" viewBox="0 0 11 7"><path d="M1 1 L5.5 5.5 L10 1" fill="none" stroke="#333" stroke-width="1.3"/></svg>
<svg style="position:absolute;left:1535px;top:334px;" width="22" height="21" viewBox="0 0 22 21"><rect x="1.6" y="1.6" width="17.8" height="3.4" fill="#bdbdbd"/><path d="M1.6 18.5 V1.6 H19.4 V9 M1.6 5 H19.4 M1.6 18.5 H9" fill="none" stroke="#333" stroke-width="1.3"/><circle cx="13.5" cy="14" r="3.8" fill="none" stroke="#333" stroke-width="1.3"/><path d="M16.3 16.8 L19.5 20" stroke="#333" stroke-width="1.4"/></svg>
<div class="t" style="left:1560px;top:335.0px;line-height:20px;color:#333;letter-spacing:-0.3px">Podgląd</div>
<svg style="position:absolute;left:1625px;top:334px;" width="22" height="22" viewBox="0 0 22 22"><path d="M1.5 10.5 A9.7 9.7 0 0 1 20.3 8 M20.8 12.5 A9.7 9.7 0 0 1 2 14.5" fill="none" stroke="#333" stroke-width="1.3"/><path d="M21 1 V8.5 H14 M1 21.5 V13.5 H9" fill="none" stroke="#333" stroke-width="1.3"/></svg>
<div style="position:absolute;left:21px;top:365.5px;width:1315px;height:49px;background:#f8f7f6"></div>
<div style="position:absolute;left:21px;top:365px;width:1635px;height:1px;background:#e6e6e6"></div>
<div style="position:absolute;left:21px;top:414px;width:1315px;height:1.3px;background:#c8c8c8"></div>
<div style="position:absolute;left:54px;top:365.5px;width:1px;height:49px;background:#e3e3e3"></div>
<div style="position:absolute;left:103px;top:365.5px;width:1px;height:49px;background:#e3e3e3"></div>
<div style="position:absolute;left:320px;top:365.5px;width:1px;height:49px;background:#e3e3e3"></div>
<div style="position:absolute;left:466px;top:365.5px;width:1px;height:49px;background:#e3e3e3"></div>
<div style="position:absolute;left:731px;top:365.5px;width:1px;height:49px;background:#e3e3e3"></div>
<div style="position:absolute;left:880px;top:365.5px;width:1px;height:49px;background:#e3e3e3"></div>
<div style="position:absolute;left:1050px;top:365.5px;width:1px;height:49px;background:#e3e3e3"></div>
<div style="position:absolute;left:1275px;top:365.5px;width:1px;height:49px;background:#e3e3e3"></div>
<div style="position:absolute;left:1319px;top:365.5px;width:1px;height:49px;background:#e3e3e3"></div>
<div style="position:absolute;left:599px;top:389.5px;width:1px;height:25px;background:#e3e3e3"></div>
<div style="position:absolute;left:1130px;top:389.5px;width:1px;height:25px;background:#e3e3e3"></div>
<div style="position:absolute;left:1189px;top:389.5px;width:1px;height:25px;background:#e3e3e3"></div>
<div style="position:absolute;left:466px;top:389px;width:265px;height:1px;background:#e3e3e3"></div>
<div style="position:absolute;left:1050px;top:389px;width:225px;height:1px;background:#e3e3e3"></div>
<div style="position:absolute;left:82px;top:365.5px;width:1px;height:24px;background:#e3e3e3"></div>
<div style="position:absolute;left:82px;top:389px;width:21px;height:1px;background:#e3e3e3"></div>
<svg style="position:absolute;left:85px;top:367px;" width="16" height="18" viewBox="0 0 16 18"><path d="M8 15.5 V3 M3 8 L8 3 L13 8" fill="none" stroke="#333" stroke-width="1.2"/></svg>
<div style="position:absolute;left:30px;top:397px;width:15px;height:14.5px;border:1.2px solid #c8c8c8;box-sizing:border-box;background:#fff"></div>
<div class="t" style="left:60px;top:367.0px;line-height:20px;color:#333;-webkit-text-stroke:0.33px #333">Lp</div>
<div class="t" style="left:108px;top:367.0px;line-height:20px;color:#333;-webkit-text-stroke:0.33px #333">Opis</div>
<div class="t" style="left:326px;top:367.0px;line-height:20px;color:#333;-webkit-text-stroke:0.33px #333">Konto</div>
<div class="t" style="left:326px;top:391.0px;line-height:20px;color:#333;-webkit-text-stroke:0.33px #333">Winien</div>
<div class="t" style="left:472px;top:367.0px;line-height:20px;color:#333;-webkit-text-stroke:0.33px #333">Kwota</div>
<div class="t" style="left:472px;top:391.0px;line-height:20px;color:#333;-webkit-text-stroke:0.33px #333">Winien</div>
<div class="t" style="left:605px;top:391.0px;line-height:20px;color:#333;-webkit-text-stroke:0.33px #333">Ma</div>
<div class="t" style="left:737px;top:367.0px;line-height:20px;color:#333;-webkit-text-stroke:0.33px #333">Konto</div>
<div class="t" style="left:737px;top:391.0px;line-height:20px;color:#333;-webkit-text-stroke:0.33px #333">Ma</div>
<div class="t" style="left:886px;top:367.0px;line-height:20px;color:#333;-webkit-text-stroke:0.33px #333">Rozrachunek</div>
<div class="t" style="left:886px;top:391.0px;line-height:20px;color:#333;-webkit-text-stroke:0.33px #333">Symbol</div>
<div class="t" style="left:1056px;top:367.0px;line-height:20px;color:#333;-webkit-text-stroke:0.33px #333">Waluta</div>
<div class="t" style="left:1056px;top:391.0px;line-height:20px;color:#333;-webkit-text-stroke:0.33px #333">Symbol</div>
<div class="t" style="left:1136px;top:391.0px;line-height:20px;color:#333;-webkit-text-stroke:0.33px #333">Kurs</div>
<div class="t" style="left:1195px;top:391.0px;line-height:20px;color:#333;-webkit-text-stroke:0.33px #333">Kwota</div>
<svg style="position:absolute;left:1323px;top:383px;" width="8" height="12" viewBox="0 0 8 12"><path d="M1.5 1 L6.5 6 L1.5 11" fill="none" stroke="#888" stroke-width="1.1"/></svg>
<div style="position:absolute;left:1337px;top:365.5px;width:319px;height:49px;background:#f8f7f6"></div>
<div style="position:absolute;left:1337px;top:414px;width:319px;height:1.3px;background:#c8c8c8"></div>
<div style="position:absolute;left:1336px;top:365.5px;width:1px;height:495px;background:#e3e3e3"></div>
<div style="position:absolute;left:1590px;top:357px;width:34px;height:17px;background:#fff;border:1px solid #e0e0e0;border-radius:9px;box-sizing:border-box"></div>
<svg style="position:absolute;left:1600px;top:361px;" width="14" height="8" viewBox="0 0 14 8"><path d="M1 1 L7 6.5 L13 1" fill="none" stroke="#aaa" stroke-width="1.5"/></svg>
<div style="position:absolute;left:54.5px;top:415.5px;width:49px;height:26.2px;background:#fffde6"></div>
<div style="position:absolute;left:466px;top:415.5px;width:265px;height:26.2px;background:#bbdefb"></div>
<div style="position:absolute;left:1050px;top:415.5px;width:80.5px;height:26.2px;background:#dce775"></div>
<div style="position:absolute;left:1130.5px;top:415.5px;width:145px;height:26.2px;background:#cfd8dc"></div>
<div style="position:absolute;left:21px;top:439.9px;width:1315px;height:2px;background:#d8e4ee"></div>
<div style="position:absolute;left:31px;top:421.3px;width:15px;height:14.5px;border:1.2px solid #c8c8c8;box-sizing:border-box;background:#fff"></div>
<div style="position:absolute;left:54px;top:415.5px;width:1px;height:26.2px;background:#f0f0f0"></div>
<div class="t" style="left:-202px;width:300px;text-align:right;top:418.3px;line-height:20px;color:#222">1</div>
<div class="t" style="left:113px;top:418.3px;line-height:20px;width:205px;overflow:hidden;color:#222">zwrot kaucji</div>
<div class="t" style="left:427.5px;width:300px;text-align:right;top:418.3px;line-height:20px;color:#222">1 000,00</div>
<div class="t" style="left:741px;top:418.3px;line-height:20px;color:#222">203/000134</div>
<div class="t" style="left:890px;top:418.3px;line-height:20px;color:#222">Z10</div>
<div class="t" style="left:1060px;top:418.3px;line-height:20px;color:#222">PLN</div>
<div style="position:absolute;left:54.5px;top:441.7px;width:49px;height:26.2px;background:#fffde6"></div>
<div style="position:absolute;left:466px;top:441.7px;width:265px;height:26.2px;background:#bbdefb"></div>
<div style="position:absolute;left:1050px;top:441.7px;width:80.5px;height:26.2px;background:#dce775"></div>
<div style="position:absolute;left:1130.5px;top:441.7px;width:145px;height:26.2px;background:#cfd8dc"></div>
<div style="position:absolute;left:21px;top:466.9px;width:1315px;height:1.2px;background:#ebebeb"></div>
<div style="position:absolute;left:31px;top:447.5px;width:15px;height:14.5px;border:1.2px solid #c8c8c8;box-sizing:border-box;background:#fff"></div>
<div style="position:absolute;left:54px;top:441.7px;width:1px;height:26.2px;background:#f0f0f0"></div>
<div class="t" style="left:-202px;width:300px;text-align:right;top:444.5px;line-height:20px;color:#222">2</div>
<div class="t" style="left:113px;top:444.5px;line-height:20px;width:205px;overflow:hidden;color:#222">Zapłata za S1201</div>
<div class="t" style="left:427.5px;width:300px;text-align:right;top:444.5px;line-height:20px;color:#222">500,00</div>
<div class="t" style="left:741px;top:444.5px;line-height:20px;color:#222">200/01-O-044-C</div>
<div class="t" style="left:890px;top:444.5px;line-height:20px;color:#222">SPR/001201/2023</div>
<div class="t" style="left:1060px;top:444.5px;line-height:20px;color:#222">PLN</div>
<div style="position:absolute;left:54.5px;top:467.9px;width:49px;height:26.2px;background:#fffde6"></div>
<div style="position:absolute;left:466px;top:467.9px;width:265px;height:26.2px;background:#bbdefb"></div>
<div style="position:absolute;left:1050px;top:467.9px;width:80.5px;height:26.2px;background:#dce775"></div>
<div style="position:absolute;left:1130.5px;top:467.9px;width:145px;height:26.2px;background:#cfd8dc"></div>
<div style="position:absolute;left:21px;top:493.09999999999997px;width:1315px;height:1.2px;background:#ebebeb"></div>
<div style="position:absolute;left:31px;top:473.7px;width:15px;height:14.5px;border:1.2px solid #c8c8c8;box-sizing:border-box;background:#fff"></div>
<div style="position:absolute;left:54px;top:467.9px;width:1px;height:26.2px;background:#f0f0f0"></div>
<div class="t" style="left:-202px;width:300px;text-align:right;top:470.7px;line-height:20px;color:#222">3</div>
<div class="t" style="left:113px;top:470.7px;line-height:20px;width:205px;overflow:hidden;color:#222">zwrot uszkodzonego przedmiotu</div>
<div class="t" style="left:427.5px;width:300px;text-align:right;top:470.7px;line-height:20px;color:#e53935">-100,00</div>
<div class="t" style="left:741px;top:470.7px;line-height:20px;color:#222">200/01-O-051-C</div>
<div class="t" style="left:890px;top:470.7px;line-height:20px;color:#222">ZWROT/000081/2023</div>
<div class="t" style="left:1060px;top:470.7px;line-height:20px;color:#222">PLN</div>
<div style="position:absolute;left:54.5px;top:494.1px;width:49px;height:26.2px;background:#fffde6"></div>
<div style="position:absolute;left:466px;top:494.1px;width:265px;height:26.2px;background:#bbdefb"></div>
<div style="position:absolute;left:1050px;top:494.1px;width:80.5px;height:26.2px;background:#dce775"></div>
<div style="position:absolute;left:1130.5px;top:494.1px;width:145px;height:26.2px;background:#cfd8dc"></div>
<div style="position:absolute;left:21px;top:519.3000000000001px;width:1315px;height:1.2px;background:#ebebeb"></div>
<div style="position:absolute;left:31px;top:499.90000000000003px;width:15px;height:14.5px;border:1.2px solid #c8c8c8;box-sizing:border-box;background:#fff"></div>
<div style="position:absolute;left:54px;top:494.1px;width:1px;height:26.2px;background:#f0f0f0"></div>
<div class="t" style="left:-202px;width:300px;text-align:right;top:496.90000000000003px;line-height:20px;color:#222">4</div>
<div class="t" style="left:113px;top:496.90000000000003px;line-height:20px;width:205px;overflow:hidden;color:#222">Zapłata za S1202</div>
<div class="t" style="left:427.5px;width:300px;text-align:right;top:496.90000000000003px;line-height:20px;color:#222">400,00</div>
<div class="t" style="left:741px;top:496.90000000000003px;line-height:20px;color:#222">200/01-O-053-C</div>
<div class="t" style="left:890px;top:496.90000000000003px;line-height:20px;color:#222">SPR/001202/2023</div>
<div class="t" style="left:1060px;top:496.90000000000003px;line-height:20px;color:#222">PLN</div>
<div style="position:absolute;left:54.5px;top:520.3px;width:49px;height:26.2px;background:#fffde6"></div>
<div style="position:absolute;left:466px;top:520.3px;width:265px;height:26.2px;background:#bbdefb"></div>
<div style="position:absolute;left:1050px;top:520.3px;width:80.5px;height:26.2px;background:#dce775"></div>
<div style="position:absolute;left:1130.5px;top:520.3px;width:145px;height:26.2px;background:#cfd8dc"></div>
<div style="position:absolute;left:21px;top:545.5px;width:1315px;height:1.2px;background:#ebebeb"></div>
<div style="position:absolute;left:31px;top:526.0999999999999px;width:15px;height:14.5px;border:1.2px solid #c8c8c8;box-sizing:border-box;background:#fff"></div>
<div style="position:absolute;left:54px;top:520.3px;width:1px;height:26.2px;background:#f0f0f0"></div>
<div class="t" style="left:-202px;width:300px;text-align:right;top:523.0999999999999px;line-height:20px;color:#222">5</div>
<div class="t" style="left:113px;top:523.0999999999999px;line-height:20px;width:205px;overflow:hidden;color:#222">wypłata środków w wysokości 30</div>
<div class="t" style="left:330px;top:523.0999999999999px;line-height:20px;color:#222">200/000134</div>
<div class="t" style="left:294.5px;width:300px;text-align:right;top:523.0999999999999px;line-height:20px;color:#222">3 000,00</div>
<div class="t" style="left:890px;top:523.0999999999999px;line-height:20px;color:#222">W024</div>
<div class="t" style="left:1060px;top:523.0999999999999px;line-height:20px;color:#222">PLN</div>
<div style="position:absolute;left:54.5px;top:546.5px;width:49px;height:26.2px;background:#fffde6"></div>
<div style="position:absolute;left:466px;top:546.5px;width:265px;height:26.2px;background:#bbdefb"></div>
<div style="position:absolute;left:1050px;top:546.5px;width:80.5px;height:26.2px;background:#dce775"></div>
<div style="position:absolute;left:1130.5px;top:546.5px;width:145px;height:26.2px;background:#cfd8dc"></div>
<div style="position:absolute;left:21px;top:571.7px;width:1315px;height:1.2px;background:#ebebeb"></div>
<div style="position:absolute;left:31px;top:552.3px;width:15px;height:14.5px;border:1.2px solid #c8c8c8;box-sizing:border-box;background:#fff"></div>
<div style="position:absolute;left:54px;top:546.5px;width:1px;height:26.2px;background:#f0f0f0"></div>
<div class="t" style="left:-202px;width:300px;text-align:right;top:549.3px;line-height:20px;color:#222">6</div>
<div class="t" style="left:113px;top:549.3px;line-height:20px;width:205px;overflow:hidden;color:#222">Zapłata za S1203</div>
<div class="t" style="left:427.5px;width:300px;text-align:right;top:549.3px;line-height:20px;color:#222">200,00</div>
<div class="t" style="left:741px;top:549.3px;line-height:20px;color:#222">200/01-O-045-C</div>
<div class="t" style="left:890px;top:549.3px;line-height:20px;color:#222">SPR/001203/2023</div>
<div class="t" style="left:1060px;top:549.3px;line-height:20px;color:#222">PLN</div>
<div style="position:absolute;left:54.5px;top:572.7px;width:49px;height:26.2px;background:#fffde6"></div>
<div style="position:absolute;left:466px;top:572.7px;width:265px;height:26.2px;background:#bbdefb"></div>
<div style="position:absolute;left:1050px;top:572.7px;width:80.5px;height:26.2px;background:#dce775"></div>
<div style="position:absolute;left:1130.5px;top:572.7px;width:145px;height:26.2px;background:#cfd8dc"></div>
<div style="position:absolute;left:21px;top:597.9000000000001px;width:1315px;height:1.2px;background:#ebebeb"></div>
<div style="position:absolute;left:31px;top:578.5px;width:15px;height:14.5px;border:1.2px solid #c8c8c8;box-sizing:border-box;background:#fff"></div>
<div style="position:absolute;left:54px;top:572.7px;width:1px;height:26.2px;background:#f0f0f0"></div>
<div class="t" style="left:-202px;width:300px;text-align:right;top:575.5px;line-height:20px;color:#222">7</div>
<div class="t" style="left:113px;top:575.5px;line-height:20px;width:205px;overflow:hidden;color:#222">Zapłata za S1204</div>
<div class="t" style="left:427.5px;width:300px;text-align:right;top:575.5px;line-height:20px;color:#222">700,00</div>
<div class="t" style="left:741px;top:575.5px;line-height:20px;color:#222">200/01-O-046-C</div>
<div class="t" style="left:890px;top:575.5px;line-height:20px;color:#222">SPR/001204/2023</div>
<div class="t" style="left:1060px;top:575.5px;line-height:20px;color:#222">PLN</div>
<div style="position:absolute;left:54.5px;top:598.9px;width:49px;height:26.2px;background:#fffde6"></div>
<div style="position:absolute;left:466px;top:598.9px;width:265px;height:26.2px;background:#bbdefb"></div>
<div style="position:absolute;left:1050px;top:598.9px;width:80.5px;height:26.2px;background:#dce775"></div>
<div style="position:absolute;left:1130.5px;top:598.9px;width:145px;height:26.2px;background:#cfd8dc"></div>
<div style="position:absolute;left:21px;top:624.1px;width:1315px;height:1.2px;background:#ebebeb"></div>
<div style="position:absolute;left:31px;top:604.6999999999999px;width:15px;height:14.5px;border:1.2px solid #c8c8c8;box-sizing:border-box;background:#fff"></div>
<div style="position:absolute;left:54px;top:598.9px;width:1px;height:26.2px;background:#f0f0f0"></div>
<div class="t" style="left:-202px;width:300px;text-align:right;top:601.6999999999999px;line-height:20px;color:#222">8</div>
<div class="t" style="left:113px;top:601.6999999999999px;line-height:20px;width:205px;overflow:hidden;color:#222">wypłata środków w wysokości 20</div>
<div class="t" style="left:330px;top:601.6999999999999px;line-height:20px;color:#222">200/000134</div>
<div class="t" style="left:294.5px;width:300px;text-align:right;top:601.6999999999999px;line-height:20px;color:#222">2 000,00</div>
<div class="t" style="left:890px;top:601.6999999999999px;line-height:20px;color:#222">W025</div>
<div class="t" style="left:1060px;top:601.6999999999999px;line-height:20px;color:#222">PLN</div>
<div style="position:absolute;left:54.5px;top:625.1px;width:49px;height:26.2px;background:#fffde6"></div>
<div style="position:absolute;left:466px;top:625.1px;width:265px;height:26.2px;background:#bbdefb"></div>
<div style="position:absolute;left:1050px;top:625.1px;width:80.5px;height:26.2px;background:#dce775"></div>
<div style="position:absolute;left:1130.5px;top:625.1px;width:145px;height:26.2px;background:#cfd8dc"></div>
<div style="position:absolute;left:21px;top:650.3000000000001px;width:1315px;height:1.2px;background:#ebebeb"></div>
<div style="position:absolute;left:31px;top:630.9px;width:15px;height:14.5px;border:1.2px solid #c8c8c8;box-sizing:border-box;background:#fff"></div>
<div style="position:absolute;left:54px;top:625.1px;width:1px;height:26.2px;background:#f0f0f0"></div>
<div class="t" style="left:-202px;width:300px;text-align:right;top:627.9px;line-height:20px;color:#222">9</div>
<div class="t" style="left:113px;top:627.9px;line-height:20px;width:205px;overflow:hidden;color:#222">Zapłata za S1205</div>
<div class="t" style="left:427.5px;width:300px;text-align:right;top:627.9px;line-height:20px;color:#222">300,00</div>
<div class="t" style="left:741px;top:627.9px;line-height:20px;color:#222">200/01-O-051-C</div>
<div class="t" style="left:890px;top:627.9px;line-height:20px;color:#222">SPR/001205/2023</div>
<div class="t" style="left:1060px;top:627.9px;line-height:20px;color:#222">PLN</div>
<div style="position:absolute;left:54.5px;top:651.3px;width:49px;height:26.2px;background:#fffde6"></div>
<div style="position:absolute;left:466px;top:651.3px;width:265px;height:26.2px;background:#bbdefb"></div>
<div style="position:absolute;left:1050px;top:651.3px;width:80.5px;height:26.2px;background:#dce775"></div>
<div style="position:absolute;left:1130.5px;top:651.3px;width:145px;height:26.2px;background:#cfd8dc"></div>
<div style="position:absolute;left:21px;top:676.5px;width:1315px;height:1.2px;background:#ebebeb"></div>
<div style="position:absolute;left:31px;top:657.0999999999999px;width:15px;height:14.5px;border:1.2px solid #c8c8c8;box-sizing:border-box;background:#fff"></div>
<div style="position:absolute;left:54px;top:651.3px;width:1px;height:26.2px;background:#f0f0f0"></div>
<div class="t" style="left:-202px;width:300px;text-align:right;top:654.0999999999999px;line-height:20px;color:#222">10</div>
<div class="t" style="left:113px;top:654.0999999999999px;line-height:20px;width:205px;overflow:hidden;color:#222">zwrot wybrakowanego L</div>
<div class="t" style="left:427.5px;width:300px;text-align:right;top:654.0999999999999px;line-height:20px;color:#e53935">-200,00</div>
<div class="t" style="left:741px;top:654.0999999999999px;line-height:20px;color:#222">200/01-O-060-C</div>
<div class="t" style="left:890px;top:654.0999999999999px;line-height:20px;color:#222">ZWROT/000082/2023</div>
<div class="t" style="left:1060px;top:654.0999999999999px;line-height:20px;color:#222">PLN</div>
<div style="position:absolute;left:54.5px;top:677.5px;width:49px;height:26.2px;background:#fffde6"></div>
<div style="position:absolute;left:466px;top:677.5px;width:265px;height:26.2px;background:#bbdefb"></div>
<div style="position:absolute;left:1050px;top:677.5px;width:80.5px;height:26.2px;background:#dce775"></div>
<div style="position:absolute;left:1130.5px;top:677.5px;width:145px;height:26.2px;background:#cfd8dc"></div>
<div style="position:absolute;left:21px;top:702.7px;width:1315px;height:1.2px;background:#ebebeb"></div>
<div style="position:absolute;left:31px;top:683.3px;width:15px;height:14.5px;border:1.2px solid #c8c8c8;box-sizing:border-box;background:#fff"></div>
<div style="position:absolute;left:54px;top:677.5px;width:1px;height:26.2px;background:#f0f0f0"></div>
<div class="t" style="left:-202px;width:300px;text-align:right;top:680.3px;line-height:20px;color:#222">11</div>
<div class="t" style="left:113px;top:680.3px;line-height:20px;width:205px;overflow:hidden;color:#222">opłata za reklamę</div>
<div class="t" style="left:427.5px;width:300px;text-align:right;top:680.3px;line-height:20px;color:#e53935">-50,00</div>
<div class="t" style="left:741px;top:680.3px;line-height:20px;color:#222">202/000134</div>
<div class="t" style="left:890px;top:680.3px;line-height:20px;color:#222">O011</div>
<div class="t" style="left:1060px;top:680.3px;line-height:20px;color:#222">PLN</div>
<div style="position:absolute;left:54.5px;top:703.7px;width:49px;height:26.2px;background:#fffde6"></div>
<div style="position:absolute;left:466px;top:703.7px;width:265px;height:26.2px;background:#bbdefb"></div>
<div style="position:absolute;left:1050px;top:703.7px;width:80.5px;height:26.2px;background:#dce775"></div>
<div style="position:absolute;left:1130.5px;top:703.7px;width:145px;height:26.2px;background:#cfd8dc"></div>
<div style="position:absolute;left:21px;top:728.9000000000001px;width:1315px;height:1.2px;background:#ebebeb"></div>
<div style="position:absolute;left:31px;top:709.5px;width:15px;height:14.5px;border:1.2px solid #c8c8c8;box-sizing:border-box;background:#fff"></div>
<div style="position:absolute;left:54px;top:703.7px;width:1px;height:26.2px;background:#f0f0f0"></div>
<div class="t" style="left:-202px;width:300px;text-align:right;top:706.5px;line-height:20px;color:#222">12</div>
<div class="t" style="left:113px;top:706.5px;line-height:20px;width:205px;overflow:hidden;color:#222">Zapłata za S1206</div>
<div class="t" style="left:427.5px;width:300px;text-align:right;top:706.5px;line-height:20px;color:#222">600,00</div>
<div class="t" style="left:741px;top:706.5px;line-height:20px;color:#222">200/01-O-053-C</div>
<div class="t" style="left:890px;top:706.5px;line-height:20px;color:#222">SPR/001206/2023</div>
<div class="t" style="left:1060px;top:706.5px;line-height:20px;color:#222">PLN</div>
<div style="position:absolute;left:54.5px;top:729.9px;width:49px;height:26.2px;background:#fffde6"></div>
<div style="position:absolute;left:466px;top:729.9px;width:265px;height:26.2px;background:#bbdefb"></div>
<div style="position:absolute;left:1050px;top:729.9px;width:80.5px;height:26.2px;background:#dce775"></div>
<div style="position:absolute;left:1130.5px;top:729.9px;width:145px;height:26.2px;background:#cfd8dc"></div>
<div style="position:absolute;left:21px;top:755.1px;width:1315px;height:1.2px;background:#ebebeb"></div>
<div style="position:absolute;left:31px;top:735.6999999999999px;width:15px;height:14.5px;border:1.2px solid #c8c8c8;box-sizing:border-box;background:#fff"></div>
<div style="position:absolute;left:54px;top:729.9px;width:1px;height:26.2px;background:#f0f0f0"></div>
<div class="t" style="left:-202px;width:300px;text-align:right;top:732.6999999999999px;line-height:20px;color:#222">13</div>
<div class="t" style="left:113px;top:732.6999999999999px;line-height:20px;width:205px;overflow:hidden;color:#222">pobranie kaucji</div>
<div class="t" style="left:427.5px;width:300px;text-align:right;top:732.6999999999999px;line-height:20px;color:#e53935">-1 000,00</div>
<div class="t" style="left:741px;top:732.6999999999999px;line-height:20px;color:#222">203/000134</div>
<div class="t" style="left:890px;top:732.6999999999999px;line-height:20px;color:#222">Z11</div>
<div class="t" style="left:1060px;top:732.6999999999999px;line-height:20px;color:#222">PLN</div>
<div style="position:absolute;left:54.5px;top:756.0999999999999px;width:49px;height:26.2px;background:#fffde6"></div>
<div style="position:absolute;left:466px;top:756.0999999999999px;width:265px;height:26.2px;background:#bbdefb"></div>
<div style="position:absolute;left:1050px;top:756.0999999999999px;width:80.5px;height:26.2px;background:#dce775"></div>
<div style="position:absolute;left:1130.5px;top:756.0999999999999px;width:145px;height:26.2px;background:#cfd8dc"></div>
<div style="position:absolute;left:21px;top:781.3px;width:1315px;height:1.2px;background:#ebebeb"></div>
<div style="position:absolute;left:31px;top:761.8999999999999px;width:15px;height:14.5px;border:1.2px solid #c8c8c8;box-sizing:border-box;background:#fff"></div>
<div style="position:absolute;left:54px;top:756.0999999999999px;width:1px;height:26.2px;background:#f0f0f0"></div>
<div class="t" style="left:-202px;width:300px;text-align:right;top:758.8999999999999px;line-height:20px;color:#222">14</div>
<div class="t" style="left:113px;top:758.8999999999999px;line-height:20px;width:205px;overflow:hidden;color:#222">Saldo operacji z Z11</div>
<div class="t" style="left:330px;top:758.8999999999999px;line-height:20px;color:#222">180/01</div>
<div class="t" style="left:294.5px;width:300px;text-align:right;top:758.8999999999999px;line-height:20px;color:#e53935">-2 698,00</div>
<div class="t" style="left:1060px;top:758.8999999999999px;line-height:20px;color:#222">PLN</div>
<div style="position:absolute;left:54.5px;top:782.3px;width:49px;height:26.2px;background:#fffde6"></div>
<div style="position:absolute;left:466px;top:782.3px;width:265px;height:26.2px;background:#bbdefb"></div>
<div style="position:absolute;left:1050px;top:782.3px;width:80.5px;height:26.2px;background:#dce775"></div>
<div style="position:absolute;left:1130.5px;top:782.3px;width:145px;height:26.2px;background:#cfd8dc"></div>
<div style="position:absolute;left:21px;top:807.5px;width:1315px;height:1.2px;background:#ebebeb"></div>
<div style="position:absolute;left:31px;top:788.0999999999999px;width:15px;height:14.5px;border:1.2px solid #c8c8c8;box-sizing:border-box;background:#fff"></div>
<div style="position:absolute;left:54px;top:782.3px;width:1px;height:26.2px;background:#f0f0f0"></div>
<div class="t" style="left:-202px;width:300px;text-align:right;top:785.0999999999999px;line-height:20px;color:#222">15</div>
<div class="t" style="left:113px;top:785.0999999999999px;line-height:20px;width:205px;overflow:hidden;color:#222">Prowizja za Z11</div>
<div class="t" style="left:330px;top:785.0999999999999px;line-height:20px;color:#222">180/01</div>
<div class="t" style="left:294.5px;width:300px;text-align:right;top:785.0999999999999px;line-height:20px;color:#222">48,00</div>
<div class="t" style="left:1060px;top:785.0999999999999px;line-height:20px;color:#222">PLN</div>
<div style="position:absolute;left:21px;top:415.5px;width:3px;height:25px;background:#0b6fb8"></div>
<div style="position:absolute;left:21px;top:833px;width:1315px;height:1.2px;background:#c4c4c4"></div>
<div style="position:absolute;left:21px;top:834px;width:1315px;height:24px;background:#f8f7f6"></div>
<div style="position:absolute;left:466px;top:834px;width:265px;height:24px;background:#bbdefb"></div>
<div style="position:absolute;left:1050px;top:834px;width:225px;height:24px;background:#dce775"></div>
<div style="position:absolute;left:54px;top:834px;width:1px;height:24px;background:#ecd9d9"></div>
<div style="position:absolute;left:103px;top:834px;width:1px;height:24px;background:#ecd9d9"></div>
<div style="position:absolute;left:320px;top:834px;width:1px;height:24px;background:#ecd9d9"></div>
<div style="position:absolute;left:466px;top:834px;width:1px;height:24px;background:#ecd9d9"></div>
<div style="position:absolute;left:599px;top:834px;width:1px;height:24px;background:#ecd9d9"></div>
<div style="position:absolute;left:731px;top:834px;width:1px;height:24px;background:#ecd9d9"></div>
<div style="position:absolute;left:880px;top:834px;width:1px;height:24px;background:#ecd9d9"></div>
<div style="position:absolute;left:1050px;top:834px;width:1px;height:24px;background:#ecd9d9"></div>
<div style="position:absolute;left:1130px;top:834px;width:1px;height:24px;background:#ecd9d9"></div>
<div style="position:absolute;left:1189px;top:834px;width:1px;height:24px;background:#ecd9d9"></div>
<div style="position:absolute;left:1275px;top:834px;width:1px;height:24px;background:#ecd9d9"></div>
<div class="t" style="left:292.5px;width:300px;text-align:right;top:836.5px;line-height:20px;font-weight:bold;color:#111">2 350,00</div>
<div class="t" style="left:425.5px;width:300px;text-align:right;top:836.5px;line-height:20px;font-weight:bold;color:#111">2 350,00</div>
<div class="t" style="left:968.5px;width:300px;text-align:right;top:836.5px;line-height:20px;font-weight:bold;color:#111">0,00</div>
<div class="t" style="left:1190px;width:300px;text-align:right;top:426.0px;line-height:20px;color:#222;-webkit-text-stroke:0.2px #222">Lp</div>
<div style="position:absolute;left:1500px;top:427px;width:13px;height:19px;background:#fffde6"></div>
<div class="t" style="left:1503px;top:426.0px;line-height:20px;color:#222">1</div>
<div class="t" style="left:1190px;width:300px;text-align:right;top:451.0px;line-height:20px;color:#222;-webkit-text-stroke:0.2px #222">Opis</div>
<div class="t" style="left:1503px;top:451.0px;line-height:20px;color:#222">zwrot kaucji</div>
<div class="t" style="left:1350px;top:486.0px;line-height:20px;color:#777;-webkit-text-stroke:0.4px #777">Konto</div>
<div style="position:absolute;left:1350px;top:511px;width:306px;height:1px;background:#dedede"></div>
<div class="t" style="left:1190px;width:300px;text-align:right;top:519.0px;line-height:20px;color:#222;-webkit-text-stroke:0.2px #222">Winien</div>
<div class="t" style="left:1503px;top:519.0px;line-height:20px;color:#999;font-style:italic">brak danych</div>
<div class="t" style="left:1190px;width:300px;text-align:right;top:544.0px;line-height:20px;color:#222;-webkit-text-stroke:0.2px #222">Ma</div>
<div class="t" style="left:1503px;top:544.0px;line-height:20px;color:#222">203/000134</div>
<div class="t" style="left:1350px;top:598.0px;line-height:20px;color:#777;-webkit-text-stroke:0.4px #777">Opis konta</div>
<div style="position:absolute;left:1350px;top:623px;width:306px;height:1px;background:#dedede"></div>
<div class="t" style="left:1190px;width:300px;text-align:right;top:631.0px;line-height:20px;color:#222;-webkit-text-stroke:0.2px #222">Winien</div>
<svg style="position:absolute;left:1502px;top:635px;" width="18" height="14" viewBox="0 0 18 14"><path d="M1 2 H10 V11 M7 8 L10 11 L13 8" fill="none" stroke="#888" stroke-width="1"/></svg>
<div class="t" style="left:1365px;top:654.0px;line-height:20px;color:#999;font-style:italic">brak danych</div>
<div class="t" style="left:1190px;width:300px;text-align:right;top:679.0px;line-height:20px;color:#222;-webkit-text-stroke:0.2px #222">Ma</div>
<svg style="position:absolute;left:1502px;top:683px;" width="18" height="14" viewBox="0 0 18 14"><path d="M1 2 H10 V11 M7 8 L10 11 L13 8" fill="none" stroke="#888" stroke-width="1"/></svg>
<div class="t" style="left:1365px;top:701.0px;line-height:20px;color:#222">Oper Plat - Kaucje</div>
</body></html>
